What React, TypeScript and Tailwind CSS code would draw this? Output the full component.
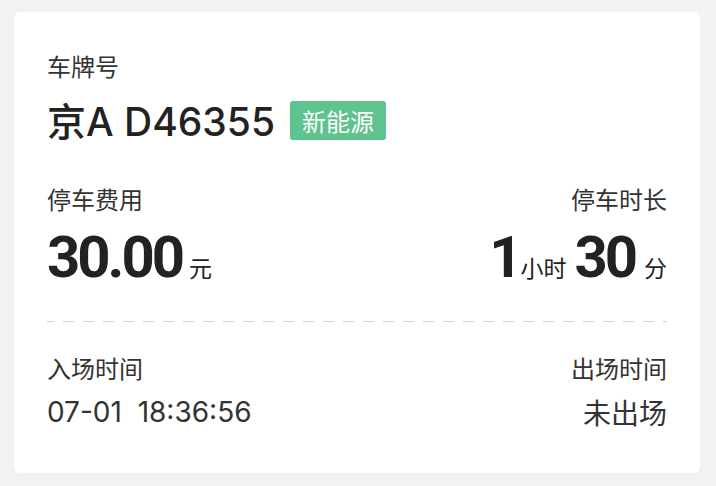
const cjk = { fontFamily: '"Noto Sans CJK SC", "Noto Sans", sans-serif' };
const latin = { fontFamily: 'Inter, "Noto Sans CJK SC", sans-serif' };
const num = { fontFamily: 'Roboto, "Noto Sans CJK SC", sans-serif' };

function Label({ children, right }: { children: React.ReactNode; right?: boolean }) {
  return (
    <div
      className={`text-[24px] leading-[30px] text-[#333] ${right ? "text-right" : ""}`}
      style={cjk}
    >
      {children}
    </div>
  );
}

function Big({ children, className = "" }: { children: React.ReactNode; className?: string }) {
  return (
    <span
      className={`text-[58px] font-bold leading-[60px] tracking-[-3px] text-[#222] ${className}`}
      style={num}
    >
      {children}
    </span>
  );
}

function Unit({ children, className = "" }: { children: React.ReactNode; className?: string }) {
  return (
    <span className={`text-[23px] leading-[30px] text-[#222] ${className}`} style={cjk}>
      {children}
    </span>
  );
}

export default function App() {
  return (
    <div className="min-h-[486px] w-[716px] bg-[#f2f2f2] pl-[14px] pr-[16px] pt-[12px] pb-[13px]">
      <div className="flex h-[461px] flex-col rounded-[6px] bg-white px-[33px] pt-[39px]">
        <Label>车牌号</Label>
        <div className="mt-[16px] flex items-center gap-[15px]">
          <span className="text-[39px] font-medium leading-[44px] text-[#222]" style={latin}>
            <span style={cjk}>京</span>A D46355
          </span>
          <span
            className="flex h-[39px] items-center rounded-[3px] bg-[#5ec38f] px-[12px] text-[24px] leading-none text-white"
            style={cjk}
          >
            新能源
          </span>
        </div>

        <div className="mt-[40px] flex justify-between">
          <div className="flex flex-col">
            <Label>停车费用</Label>
            <div className="mt-[13px] flex items-baseline">
              <Big>30.00</Big>
              <Unit className="ml-[7px]">元</Unit>
            </div>
          </div>
          <div className="flex flex-col items-end">
            <Label right>停车时长</Label>
            <div className="mt-[13px] flex items-baseline">
              <Big className="-mr-[2px]">1</Big>
              <Unit className="ml-[3px]">小时</Unit>
              <Big className="ml-[8px]">30</Big>
              <Unit className="ml-[9px]">分</Unit>
            </div>
          </div>
        </div>

        <div className="mt-[34px] h-px w-full bg-[repeating-linear-gradient(to_right,#d4d4d4_0,#d4d4d4_7px,transparent_7px,transparent_16px,#d4d4d4_16px,#d4d4d4_20px)]" />

        <div className="mt-[31px] flex justify-between">
          <div className="flex flex-col">
            <Label>入场时间</Label>
            <div className="mt-[12px] text-[28px] leading-[34px] text-[#333]" style={latin}>
              07-01&nbsp;&nbsp;18:36:56
            </div>
          </div>
          <div className="flex flex-col items-end">
            <Label right>出场时间</Label>
            <div className="mt-[12px] text-[28px] leading-[34px] text-[#333]" style={cjk}>
              未出场
            </div>
          </div>
        </div>
      </div>
    </div>
  );
}
